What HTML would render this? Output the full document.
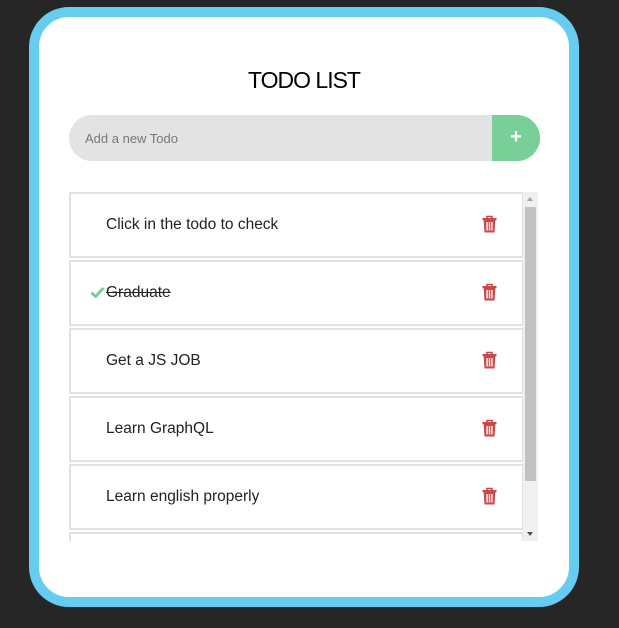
<!DOCTYPE html>
<html><head><style>
*{box-sizing:border-box;margin:0;padding:0}
body{width:619px;height:628px;background:#262626;position:relative;overflow:hidden;font-family:"Liberation Sans",sans-serif}
.card{position:absolute;left:29px;top:7px;width:550px;height:600px;background:#fff;border:10px solid #66ccf0;border-radius:40px}
h1{position:absolute;left:0;right:0;top:50px;text-align:center;font-weight:normal;font-size:23px;color:#000;letter-spacing:-1px}
.inp{position:absolute;left:30px;top:98px;width:471px;height:46px;background:#e3e3e3;border-radius:23px;overflow:hidden}
.inp span{position:absolute;left:16px;top:16px;font-size:13px;color:#777}
.btn{position:absolute;right:0;top:0;width:48px;height:46px;background:#79cf98;color:#fff;font-size:20px;font-weight:bold;text-align:center;line-height:44px}
.list{position:absolute;left:30px;top:175px;width:469px;height:349px;overflow:hidden}
.item{position:absolute;left:0;width:455px;height:66px;border:2px solid #e2e2e2;font-size:15.5px;color:#222}
.item .t{position:absolute;left:35px;top:22px}
.item .trash{position:absolute;left:411px;top:21px}
.chk{position:absolute;left:19px;top:24px}
.sb{position:absolute;left:454px;top:0;width:15px;height:349px;background:#f0f0f0}
.thumb{position:absolute;left:2px;top:15px;width:11px;height:274px;background:#c1c1c1}
.ar{position:absolute;left:4px;width:0;height:0;border-left:3px solid transparent;border-right:3px solid transparent}
</style></head><body>
<div class="card">
<h1>TODO LIST</h1>
<div class="inp"><span>Add a new Todo</span><div class="btn">+</div></div>
<div class="list">
<div class="item" style="top:0"><span class="t">Click in the todo to check</span><svg class="trash" width="15" height="18" viewBox="0 0 15 18"><path d="M5 3.5V1.5h5v2" fill="none" stroke="#c9484a" stroke-width="1.6"/><rect x="0.5" y="3" width="14" height="2.2" fill="#c9484a"/><path d="M1.6 5h11.8l-.9 12.5H2.5z" fill="#c9484a"/><rect x="4.4" y="7" width="1.4" height="8.5" fill="#fff"/><rect x="6.8" y="7" width="1.4" height="8.5" fill="#fff"/><rect x="9.2" y="7" width="1.4" height="8.5" fill="#fff"/></svg></div>
<div class="item" style="top:68px"><svg class="chk" width="15" height="12" viewBox="0 0 15 12"><path d="M1.5 6.5l4 4L13.5 2" fill="none" stroke="#79cf98" stroke-width="3"/></svg><span class="t" style="text-decoration:line-through">Graduate</span><svg class="trash" width="15" height="18" viewBox="0 0 15 18"><path d="M5 3.5V1.5h5v2" fill="none" stroke="#c9484a" stroke-width="1.6"/><rect x="0.5" y="3" width="14" height="2.2" fill="#c9484a"/><path d="M1.6 5h11.8l-.9 12.5H2.5z" fill="#c9484a"/><rect x="4.4" y="7" width="1.4" height="8.5" fill="#fff"/><rect x="6.8" y="7" width="1.4" height="8.5" fill="#fff"/><rect x="9.2" y="7" width="1.4" height="8.5" fill="#fff"/></svg></div>
<div class="item" style="top:136px"><span class="t">Get a JS JOB</span><svg class="trash" width="15" height="18" viewBox="0 0 15 18"><path d="M5 3.5V1.5h5v2" fill="none" stroke="#c9484a" stroke-width="1.6"/><rect x="0.5" y="3" width="14" height="2.2" fill="#c9484a"/><path d="M1.6 5h11.8l-.9 12.5H2.5z" fill="#c9484a"/><rect x="4.4" y="7" width="1.4" height="8.5" fill="#fff"/><rect x="6.8" y="7" width="1.4" height="8.5" fill="#fff"/><rect x="9.2" y="7" width="1.4" height="8.5" fill="#fff"/></svg></div>
<div class="item" style="top:204px"><span class="t">Learn GraphQL</span><svg class="trash" width="15" height="18" viewBox="0 0 15 18"><path d="M5 3.5V1.5h5v2" fill="none" stroke="#c9484a" stroke-width="1.6"/><rect x="0.5" y="3" width="14" height="2.2" fill="#c9484a"/><path d="M1.6 5h11.8l-.9 12.5H2.5z" fill="#c9484a"/><rect x="4.4" y="7" width="1.4" height="8.5" fill="#fff"/><rect x="6.8" y="7" width="1.4" height="8.5" fill="#fff"/><rect x="9.2" y="7" width="1.4" height="8.5" fill="#fff"/></svg></div>
<div class="item" style="top:272px"><span class="t">Learn english properly</span><svg class="trash" width="15" height="18" viewBox="0 0 15 18"><path d="M5 3.5V1.5h5v2" fill="none" stroke="#c9484a" stroke-width="1.6"/><rect x="0.5" y="3" width="14" height="2.2" fill="#c9484a"/><path d="M1.6 5h11.8l-.9 12.5H2.5z" fill="#c9484a"/><rect x="4.4" y="7" width="1.4" height="8.5" fill="#fff"/><rect x="6.8" y="7" width="1.4" height="8.5" fill="#fff"/><rect x="9.2" y="7" width="1.4" height="8.5" fill="#fff"/></svg></div>
<div class="item" style="top:340px"></div>
<div class="sb"><div class="ar" style="top:5px;border-bottom:4px solid #a3a3a3"></div><div class="thumb"></div><div class="ar" style="top:340px;border-top:4px solid #505050"></div></div>
</div>
</div>
</body></html>
